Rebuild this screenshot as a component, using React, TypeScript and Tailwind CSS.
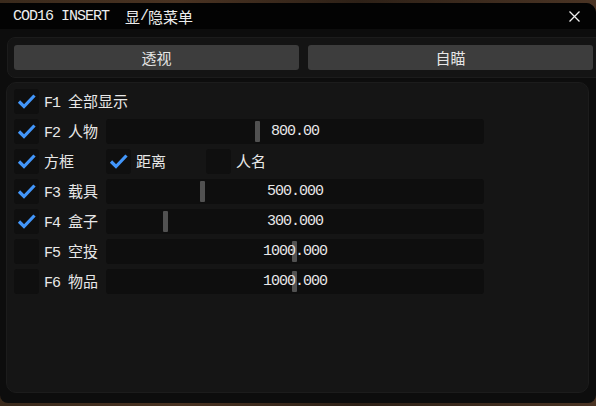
import React from "react";

const FONT = { fontFamily: '"Liberation Mono","Noto Sans CJK SC",monospace' };

function Txt({ s }: { s: string }) {
  const parts = s.split(/([\u3400-\u9fff]+)/).filter((p) => p.length > 0);
  return (
    <>
      {parts.map((p, i) =>
        /[\u3400-\u9fff]/.test(p) ? (
          <span key={i} className="text-[15px] tracking-normal" style={{ fontFamily: '"Noto Sans CJK SC",sans-serif' }}>
            {p}
          </span>
        ) : (
          <span key={i} className="whitespace-pre">{p}</span>
        )
      )}
    </>
  );
}

function Check({ on }: { on: boolean }) {
  return (
    <div className="w-[25px] h-[25px] shrink-0 rounded-[3px] bg-[#0f0f0f] flex items-center justify-center">
      {on && (
        <svg width="25" height="25" viewBox="0 0 25 25">
          <path d="M5 12.5 L10 17.5 L20.5 6.5" fill="none" stroke="#4296fa" strokeWidth="3.2" strokeLinecap="butt" strokeLinejoin="miter" />
        </svg>
      )}
    </div>
  );
}

function Slider({ grab, value }: { grab: number; value: string }) {
  return (
    <div className="relative w-[378px] h-[25px] rounded-[3px] bg-[#0e0e0e] flex items-center justify-center">
      <div className="absolute top-[2px] bottom-[2px] w-[5px] rounded-[1px] bg-[#515151]" style={{ left: grab }} />
      <span className="relative text-[#e8e8e8] whitespace-nowrap">{value}</span>
    </div>
  );
}

function Row({ on, label, slider }: { on: boolean; label: string; slider?: { grab: number; value: string } }) {
  return (
    <div className="flex items-center h-[25px]">
      <Check on={on} />
      <div className="w-[67px] shrink-0 pl-[5px] text-[#e8e8e8] whitespace-nowrap">
        <Txt s={label} />
      </div>
      {slider && <Slider grab={slider.grab} value={slider.value} />}
    </div>
  );
}

export default function App() {
  return (
    <div
      className="w-[596px] h-[406px] pt-[3px] overflow-hidden text-[15px] tracking-[-1px] leading-none"
      style={{ ...FONT, background: "linear-gradient(90deg,#3a2a1c,#4a3322 30%,#2e2117 60%,#4a3424)" }}
    >
      <div className="w-[596px] h-[400px] bg-[#0d0d0d] rounded-tr-[10px] rounded-b-[8px] overflow-hidden flex flex-col">
        <div className="h-[26px] shrink-0 bg-[#030303] flex items-center justify-between pl-[13px] pr-[16px] text-[#ededed]">
          <div className="flex items-center whitespace-nowrap">
            <Txt s="COD16 INSERT  显/隐菜单" />
          </div>
          <svg width="11" height="11" viewBox="0 0 11 11">
            <path d="M0.5 0.5 L10.5 10.5 M10.5 0.5 L0.5 10.5" stroke="#f0f0f0" strokeWidth="1.3" />
          </svg>
        </div>
        <div className="ml-[7px] mt-[8px] w-[600px] h-[41px] shrink-0 rounded-[8px] border border-[#1c1c1c] bg-[#141414] flex items-center gap-[9px] px-[6px]">
          <div className="w-[285px] h-[25px] rounded-[3px] bg-[#3d3d3d] flex items-center justify-center text-[#e6e6e6]">
            <Txt s="透视" />
          </div>
          <div className="w-[285px] h-[25px] rounded-[3px] bg-[#3d3d3d] flex items-center justify-center text-[#e6e6e6]">
            <Txt s="自瞄" />
          </div>
        </div>
        <div className="ml-[6px] mt-[4px] w-[583px] h-[311px] shrink-0 rounded-[10px] border border-[#1c1c1c] bg-[#151515] pl-[7px] pt-[6px] flex flex-col gap-[5px]">
          <Row on label="F1 全部显示" />
          <Row on label="F2 人物" slider={{ grab: 149, value: "800.00" }} />
          <div className="flex items-center h-[25px]">
            <Check on />
            <div className="w-[67px] shrink-0 pl-[5px] text-[#e8e8e8] whitespace-nowrap">
              <Txt s="方框" />
            </div>
            <Check on />
            <div className="w-[75px] shrink-0 pl-[5px] text-[#e8e8e8] whitespace-nowrap">
              <Txt s="距离" />
            </div>
            <Check on={false} />
            <div className="pl-[5px] text-[#e8e8e8] whitespace-nowrap">
              <Txt s="人名" />
            </div>
          </div>
          <Row on label="F3 载具" slider={{ grab: 94, value: "500.000" }} />
          <Row on label="F4 盒子" slider={{ grab: 57, value: "300.000" }} />
          <Row on={false} label="F5 空投" slider={{ grab: 186, value: "1000.000" }} />
          <Row on={false} label="F6 物品" slider={{ grab: 186, value: "1000.000" }} />
        </div>
      </div>
    </div>
  );
}
